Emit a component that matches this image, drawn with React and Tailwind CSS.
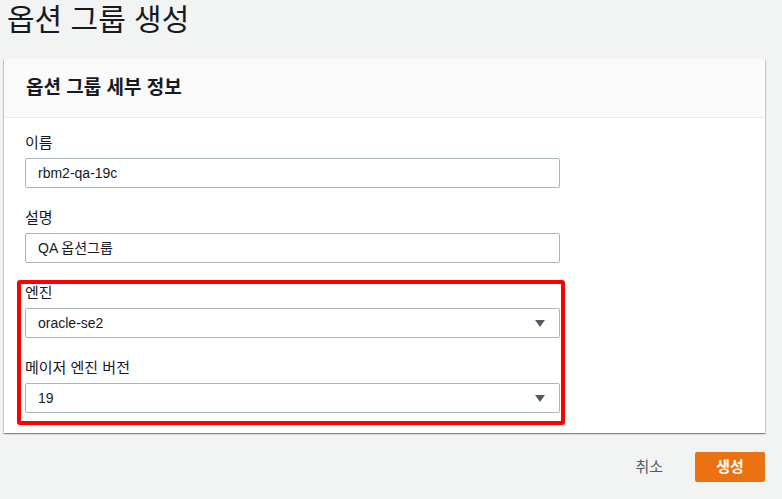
import React from 'react';

const FONT = { fontFamily: '"Liberation Sans", "Noto Sans CJK KR", sans-serif' };

// Triangle used by the select boxes
const Caret = () => (
  <svg width="10" height="7" viewBox="0 0 10 7" className="shrink-0">
    <path d="M0 0 L10 0 L5 7 Z" fill="#545b64" />
  </svg>
);

const Field = ({ label, value, select = false }) => (
  <div className="flex flex-col">
    <label className="text-[15px] leading-[22px] text-[#16191f] h-[22px]">{label}</label>
    <div className="mt-[4px] w-[535px] h-[30px] border border-[#aab7b8] rounded-[2px] bg-white flex items-center pl-[12px] pr-[14px]">
      <span className="flex-1 text-[14px] text-[#16191f] leading-[20px]">{value}</span>
      {select && <Caret />}
    </div>
  </div>
);

export default function App() {
  return (
    <div className="w-full h-[499px] bg-[#f2f3f3] overflow-hidden pl-[4px]" style={FONT}>
      <div className="h-[59px] pl-[3px] pt-[1px]">
        <h1 className="text-[30px] leading-[38px] text-[#16191f] font-normal">옵션 그룹 생성</h1>
      </div>

      <div className="w-[761px] bg-white shadow-[0_1px_1px_0_rgba(0,28,36,0.3),1px_1px_1px_0_rgba(0,28,36,0.15),-1px_1px_1px_0_rgba(0,28,36,0.15)]">
        <div className="h-[59px] bg-[#fafafa] border-b border-[#eaeded] flex items-center pl-[22px]">
          <h2 className="text-[19px] font-bold text-[#16191f] leading-[24px]">옵션 그룹 세부 정보</h2>
        </div>

        <div className="relative pl-[21px] pt-[14px] pb-[20px] flex flex-col gap-[19px]">
          <Field label="이름" value="rbm2-qa-19c" />
          <Field label="설명" value="QA 옵션그룹" />
          <Field label="엔진" value="oracle-se2" select />
          <Field label="메이저 엔진 버전" value="19" select />

          {/* red annotation frame */}
          <div className="absolute left-[13px] top-[162px] w-[548px] h-[145px] border-[4px] border-[#ff0000] rounded-[3px] pointer-events-none" />
        </div>
      </div>

      <div className="w-[761px] flex justify-end items-center mt-[19px] gap-[12px]">
        <button className="h-[30px] px-[20px] text-[15px] text-[#545b64]">취소</button>
        <button className="h-[30px] w-[70px] rounded-[2px] bg-[#ec7211] text-white text-[15px] font-bold">생성</button>
      </div>
    </div>
  );
}
